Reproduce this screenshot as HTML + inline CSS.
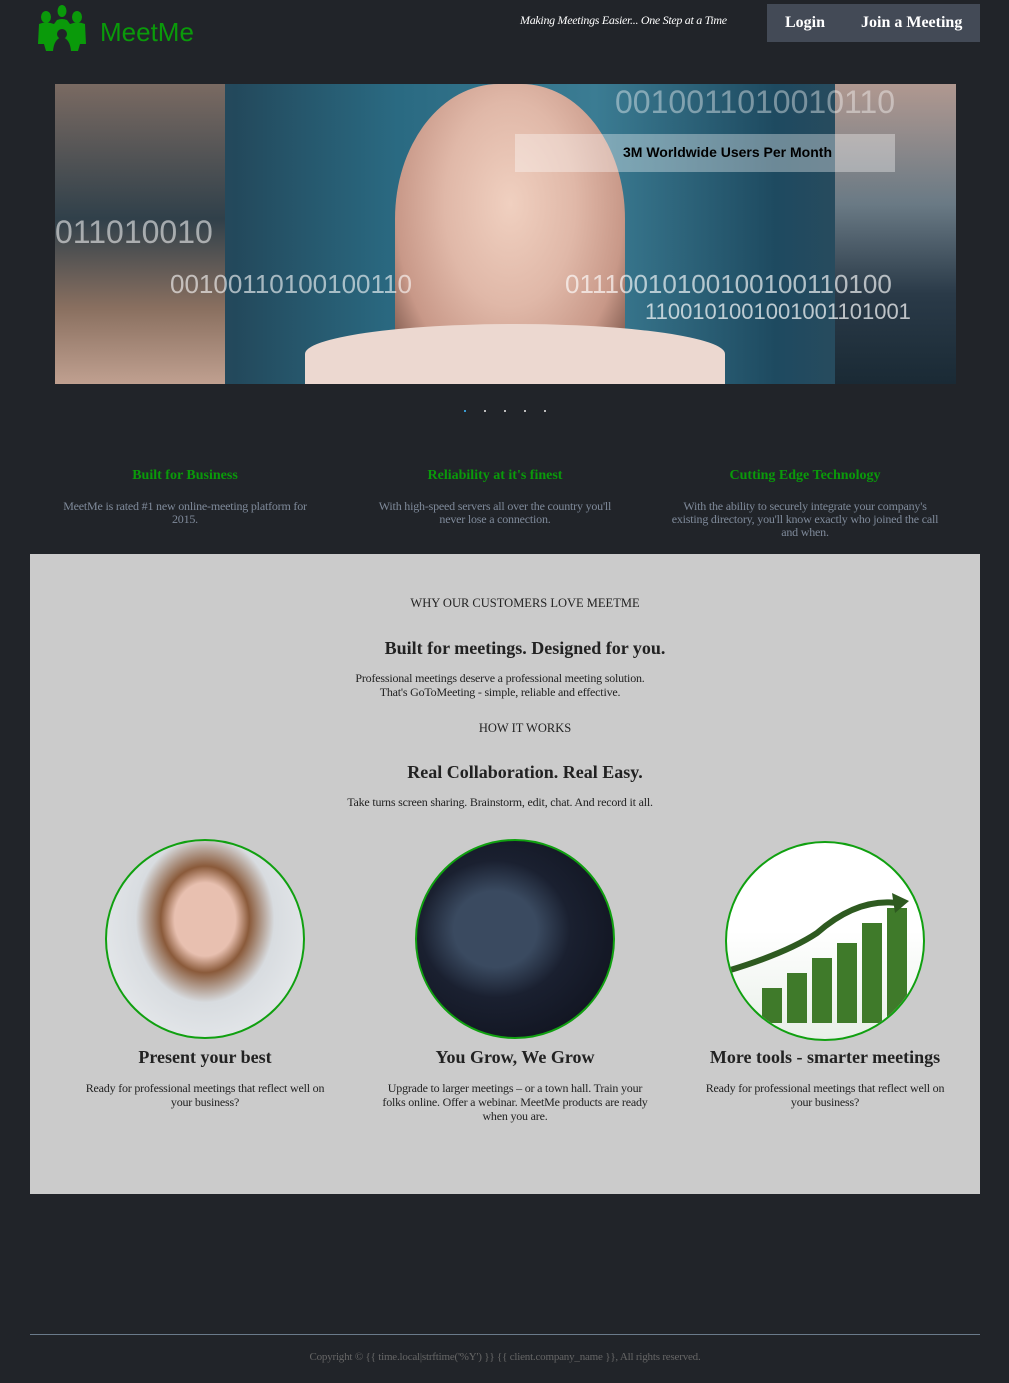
<!DOCTYPE html>
<html><head><meta charset="utf-8"><style>
*{margin:0;padding:0;box-sizing:border-box}
body{width:1009px;height:1383px;background:#212429;position:relative;font-family:"Liberation Serif",serif;overflow:hidden}
.a{position:absolute}
.c{text-align:center}
.ft{color:#0a9a0a;font-weight:bold;font-size:14px}
.fx{color:#7f8a9a;font-size:12px;line-height:13px;letter-spacing:-0.2px}
.g{color:#222;}
.circ{position:absolute;width:200px;height:200px;border-radius:50%;border:2px solid #10a010;overflow:hidden}
</style></head><body>
<svg class="a" style="left:36px;top:4px" width="52" height="48" viewBox="0 0 52 48">
<g fill="#0a9a0a"><ellipse cx="26" cy="7" rx="4.5" ry="6"/><ellipse cx="10" cy="13" rx="5" ry="6"/><ellipse cx="41" cy="13" rx="5" ry="6"/>
<path d="M3 20 Q10 17 18 20 L21 16 Q26 14 31 16 L34 20 Q42 17 49 20 L50 40 L44 40 L42 47 L35 47 Q34 35 26 33 Q18 35 17 47 L10 47 L8 40 L2 40 Z"/></g>
<circle cx="26" cy="30" r="5" fill="#212429"/></svg>
<div class="a" style="left:100px;top:17px;color:#0a9a0a;font:26px 'Liberation Sans',sans-serif">MeetMe</div>
<div class="a" style="left:520px;top:13px;color:#fff;font-style:italic;font-size:12px;letter-spacing:-0.3px">Making Meetings Easier... One Step at a Time</div>
<div class="a" style="left:767px;top:4px;width:213px;height:38px;background:#434a56"></div>
<div class="a" style="left:785px;top:14px;color:#fff;font-weight:bold;font-size:16px">Login</div>
<div class="a" style="left:861px;top:14px;color:#fff;font-weight:bold;font-size:16px">Join a Meeting</div>
<div class="a" style="left:55px;top:84px;width:901px;height:300px;overflow:hidden;background:linear-gradient(90deg,#3a4a55 0%,#23495c 20%,#2a6a82 38%,#3b7c93 60%,#1e4a60 80%,#3a4d5a 100%)">
<div class="a" style="left:0;top:0;width:170px;height:300px;background:linear-gradient(180deg,#7a6a62,#30404a 45%,#8a7060 75%,#c0a090)"></div>
<div class="a" style="left:780px;top:0;width:121px;height:300px;background:linear-gradient(180deg,#b09890,#6a7a85 40%,#2a3a48 70%,#1a2a35)"></div>
<div class="a" style="left:340px;top:0;width:230px;height:300px;border-radius:45% 45% 10% 10%;background:radial-gradient(ellipse at 50% 40%,#f0d0c0 0%,#e0b8a8 40%,#c89888 70%,#5a3a30 100%)"></div>
<div class="a" style="left:250px;top:240px;width:420px;height:60px;background:#ecd8d0;border-radius:50% 50% 0 0"></div>
<div class="a" style="left:460px;top:50px;width:380px;height:38px;background:rgba(255,255,255,.35)"></div>
<div class="a" style="left:568px;top:60px;font:bold 14px 'Liberation Sans',sans-serif;color:#000">3M Worldwide Users Per Month</div>
<div class="a" style="left:0;top:130px;color:rgba(255,255,255,.55);font:32px 'Liberation Sans',sans-serif">011010010</div>
<div class="a" style="left:115px;top:185px;color:rgba(255,255,255,.6);font:26px 'Liberation Sans',sans-serif">00100110100100110</div>
<div class="a" style="left:510px;top:185px;color:rgba(255,255,255,.65);font:26px 'Liberation Sans',sans-serif">01110010100100100110100</div>
<div class="a" style="left:560px;top:0;color:rgba(255,255,255,.4);font:32px 'Liberation Sans',sans-serif">0010011010010110</div>
<div class="a" style="left:590px;top:215px;color:rgba(255,255,255,.7);font:22px 'Liberation Sans',sans-serif">1100101001001001101001</div>
</div>
<div class="a" style="left:464px;top:410px;width:2px;height:2px;background:#3a9ad0"></div>
<div class="a" style="left:484px;top:410px;width:2px;height:2px;background:#bbb"></div>
<div class="a" style="left:504px;top:410px;width:2px;height:2px;background:#bbb"></div>
<div class="a" style="left:524px;top:410px;width:2px;height:2px;background:#bbb"></div>
<div class="a" style="left:544px;top:410px;width:2px;height:2px;background:#bbb"></div>
<div class="a c ft" style="left:35px;top:468px;width:300px">Built for Business</div>
<div class="a c ft" style="left:345px;top:468px;width:300px">Reliability at it's finest</div>
<div class="a c ft" style="left:655px;top:468px;width:300px">Cutting Edge Technology</div>
<div class="a c fx" style="left:50px;top:500px;width:270px">MeetMe is rated #1 new online-meeting platform for 2015.</div>
<div class="a c fx" style="left:365px;top:500px;width:260px">With high-speed servers all over the country you'll never lose a connection.</div>
<div class="a c fx" style="left:670px;top:500px;width:270px">With the ability to securely integrate your company's existing directory, you'll know exactly who joined the call and when.</div>
<div class="a" style="left:30px;top:554px;width:950px;height:640px;background:#cbcbcb"></div>
<div class="a c g" style="left:30px;top:596px;width:990px;font-size:12.5px">WHY OUR CUSTOMERS LOVE MEETME</div>
<div class="a c g" style="left:30px;top:638px;width:990px;font-size:18px;font-weight:bold">Built for meetings. Designed for you.</div>
<div class="a c g" style="left:0;top:671px;width:1000px;font-size:12px;line-height:14px;letter-spacing:-0.2px">Professional meetings deserve a professional meeting solution.<br>That's GoToMeeting - simple, reliable and effective.</div>
<div class="a c g" style="left:30px;top:721px;width:990px;font-size:12.5px">HOW IT WORKS</div>
<div class="a c g" style="left:30px;top:762px;width:990px;font-size:18px;font-weight:bold">Real Collaboration. Real Easy.</div>
<div class="a c g" style="left:0;top:795px;width:1000px;font-size:12px;letter-spacing:-0.2px">Take turns screen sharing. Brainstorm, edit, chat. And record it all.</div>
<div class="circ" style="left:105px;top:839px;background:radial-gradient(ellipse at 50% 40%,#e8c0b0 0 22%,#8a5a3a 32%,#d8dce0 50%,#eef0f2 100%)"></div>
<div class="circ" style="left:415px;top:839px;background:radial-gradient(ellipse at 40% 45%,#3a4a60 0 25%,#1a2030 45%,#0c0e18 100%)"></div>
<div class="circ" style="left:725px;top:841px;background:linear-gradient(180deg,#fff 0 45%,#fff 45%,#e8efe8 100%)">
<svg width="200" height="200"><g fill="#3f7a2a"><rect x="35" y="145" width="20" height="35"/><rect x="60" y="130" width="20" height="50"/><rect x="85" y="115" width="20" height="65"/><rect x="110" y="100" width="20" height="80"/><rect x="135" y="80" width="20" height="100"/><rect x="160" y="65" width="20" height="115"/></g><path d="M0 128 Q60 110 90 90 Q130 55 170 60" stroke="#2e5a20" stroke-width="6" fill="none"/><path d="M165 50 L182 58 L168 70 Z" fill="#2e5a20"/></svg></div>
<div class="a c g" style="left:55px;top:1047px;width:300px;font-size:18px;font-weight:bold">Present your best</div>
<div class="a c g" style="left:365px;top:1047px;width:300px;font-size:18px;font-weight:bold">You Grow, We Grow</div>
<div class="a c g" style="left:675px;top:1047px;width:300px;font-size:18px;font-weight:bold">More tools - smarter meetings</div>
<div class="a c g" style="left:75px;top:1081px;width:260px;font-size:12px;line-height:14px;letter-spacing:-0.2px">Ready for professional meetings that reflect well on your business?</div>
<div class="a c g" style="left:380px;top:1081px;width:270px;font-size:12px;line-height:14px;letter-spacing:-0.2px">Upgrade to larger meetings – or a town hall. Train your folks online. Offer a webinar. MeetMe products are ready when you are.</div>
<div class="a c g" style="left:695px;top:1081px;width:260px;font-size:12px;line-height:14px;letter-spacing:-0.2px">Ready for professional meetings that reflect well on your business?</div>
<div class="a" style="left:30px;top:1334px;width:950px;height:1px;background:#6a7a8a"></div>
<div class="a c" style="left:20px;top:1351px;width:970px;color:#666;font-size:11px;letter-spacing:-0.2px">Copyright © {{ time.local|strftime('%Y') }} {{ client.company_name }}, All rights reserved.</div>
</body></html>
